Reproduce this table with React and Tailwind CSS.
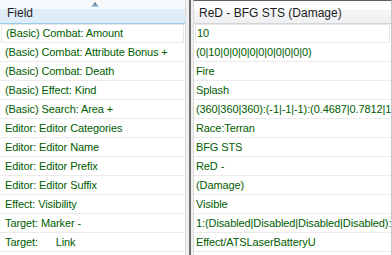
import React from 'react';

// Property grid: field names on the left, values of the selected object on the right.
const rows = [
  ['(Basic) Combat: Amount', '10'],
  ['(Basic) Combat: Attribute Bonus +', '(0|10|0|0|0|0|0|0|0|0|0|0)'],
  ['(Basic) Combat: Death', 'Fire'],
  ['(Basic) Effect: Kind', 'Splash'],
  ['(Basic) Search: Area +', '(360|360|360):(-1|-1|-1):(0.4687|0.7812|1.2|1.5)'],
  ['Editor: Editor Categories', 'Race:Terran'],
  ['Editor: Editor Name', 'BFG STS'],
  ['Editor: Editor Prefix', 'ReD -'],
  ['Editor: Editor Suffix', '(Damage)'],
  ['Effect: Visibility', 'Visible'],
  ['Target: Marker -', '1:(Disabled|Disabled|Disabled|Disabled):(0)'],
  ['Target:      Link', 'Effect/ATSLaserBatteryU'],
];

const font = { fontFamily: 'Tahoma, "Liberation Sans", Arial, sans-serif' };

function SortArrow() {
  return (
    <svg width="8" height="5" viewBox="0 0 8 5" className="absolute left-[91px] top-[2px]">
      <defs>
        <linearGradient id="sortGrad" x1="0" y1="0" x2="0" y2="1">
          <stop offset="0" stopColor="#3d5a73" />
          <stop offset="1" stopColor="#a9d0ec" />
        </linearGradient>
      </defs>
      <path d="M4 0 L8 5 L0 5 Z" fill="url(#sortGrad)" />
    </svg>
  );
}

function Row({ text, pad, first }) {
  return (
    <div
      className={`h-[19px] shrink-0 flex items-center whitespace-pre overflow-hidden text-[11px] tracking-[-0.1px] text-[#005c00] border-b border-[#ebebeb] ${pad} ${first ? 'border-t border-x border-t-[#e6e6e6] border-x-[#e6e6e6] mx-[1px]' : ''}`}
    >
      {text}
    </div>
  );
}

export default function App() {
  return (
    <div className="w-[392px] h-[255px] flex bg-[#f0f0f0] overflow-hidden select-none" style={font}>
      {/* field column */}
      <div className="w-[186px] shrink-0 flex flex-col bg-white border-r border-[#d9d9d9]">
        <div className="relative h-[24px] shrink-0 flex items-center pl-[7px] text-[12px] text-[#1e1e1e] border-b border-[#96cbea] bg-[linear-gradient(to_bottom,#f6fafd_0%,#f6fafd_38%,#e0eef9_38%,#dcecf8_100%)]">
          <SortArrow />
          <span className="pt-[3px]">Field</span>
        </div>
        {rows.map(([f], i) => (
          <Row key={f} text={f} pad={i === 0 ? 'pl-[4px]' : 'pl-[5px]'} first={i === 0} />
        ))}
      </div>

      {/* splitter */}
      <div className="w-[7px] shrink-0 flex justify-center">
        <div className="w-[2px] h-full bg-[#6e6e6e]" />
      </div>

      {/* value column */}
      <div className="flex-1 min-w-0 flex flex-col bg-white border-t border-[#5f5f5f] border-l border-l-[#dadada] border-r border-r-[#c8c8c8]">
        <div className="h-[23px] shrink-0 flex items-center pl-[5px] text-[12px] text-[#1e1e1e] border-b border-[#d5d5d5] bg-[linear-gradient(to_bottom,#ffffff_0%,#ffffff_40%,#f4f5f7_40%,#eff0f2_100%)]">
          <span className="pt-[2px]">ReD - BFG STS (Damage)</span>
        </div>
        {rows.map(([f, v], i) => (
          <Row key={f} text={v} pad={i === 0 ? 'pl-[1px]' : 'pl-[2px]'} first={i === 0} />
        ))}
      </div>
    </div>
  );
}
